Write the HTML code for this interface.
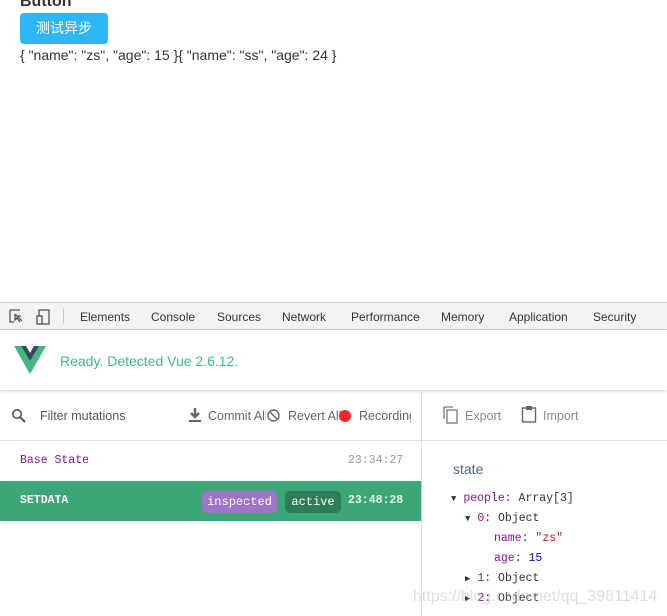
<!DOCTYPE html><html><head><style>
*{margin:0;padding:0;box-sizing:border-box}
body{width:667px;height:616px;position:relative;background:#fff;font-family:"Liberation Sans","Noto Sans CJK SC",sans-serif;overflow:hidden}
.a{position:absolute;white-space:nowrap}
.m{font-family:"Liberation Mono","DejaVu Sans Mono",monospace;font-size:12px}
.t{font-size:12px;color:#333}
.g{font-size:12.5px;color:#666}
</style></head><body>
<div class="a" style="left:20px;top:-7px;font-size:16px;font-weight:bold;color:#333">Button</div>
<div class="a" style="left:20px;top:13px;width:88px;height:31px;background:#2db7f5;border-radius:4px;color:#fff;font-size:14px;text-align:center;line-height:31px">测试异步</div>
<div class="a" style="left:20px;top:47px;font-size:14px;color:#333">{ "name": "zs", "age": 15 }{ "name": "ss", "age": 24 }</div>

<div class="a" style="left:0;top:302px;width:667px;height:28px;background:#f3f3f3;border-top:1px solid #ccc;border-bottom:1px solid #ccc"></div>
<svg class="a" style="left:9px;top:308px" width="44" height="18"><path d="M1 2h10M1 2v12h4M12 8l-3 0M6 6l7 7M6 6v6l2-2 3 4" stroke="#555" fill="none" stroke-width="1.3"/><rect x="30" y="2" width="10" height="14" stroke="#555" fill="none" stroke-width="1.3"/><rect x="28" y="8" width="5" height="8" stroke="#555" fill="#f3f3f3" stroke-width="1.3"/></svg>
<div class="a" style="left:63px;top:308px;width:1px;height:16px;background:#ccc"></div>
<div class="a t" style="left:80px;top:310px">Elements</div>
<div class="a t" style="left:151px;top:310px">Console</div>
<div class="a t" style="left:217px;top:310px">Sources</div>
<div class="a t" style="left:282px;top:310px">Network</div>
<div class="a t" style="left:351px;top:310px">Performance</div>
<div class="a t" style="left:441px;top:310px">Memory</div>
<div class="a t" style="left:509px;top:310px">Application</div>
<div class="a t" style="left:593px;top:310px">Security</div>

<div class="a" style="left:0;top:330px;width:667px;height:60px;background:#fff;box-shadow:0 1px 3px rgba(0,0,0,.2)"></div>
<svg class="a" style="left:14px;top:346px" width="32" height="28"><path d="M0 0h7l9 15 9-15h7L16 28z" fill="#41b883"/><path d="M7 0h5l4 7 4-7h5L16 15z" fill="#35495e"/></svg>
<div class="a" style="left:60px;top:353px;font-size:14px;color:#42b983">Ready. Detected Vue 2.6.12.</div>

<div class="a" style="left:421px;top:391px;width:1px;height:225px;background:#e0e0e0"></div>
<div class="a" style="left:0;top:440px;width:667px;height:1px;background:#e0e0e0"></div>
<svg class="a" style="left:11px;top:408px" width="16" height="16"><circle cx="6" cy="6" r="4.2" stroke="#555" stroke-width="1.6" fill="none"/><path d="M9 9l5 5" stroke="#555" stroke-width="2"/></svg>
<div class="a g" style="left:40px;top:409px;color:#555">Filter mutations</div>
<svg class="a" style="left:187px;top:407px" width="16" height="16"><path d="M8 1v9M4 6l4 4 4-4" stroke="#666" stroke-width="2.5" fill="none"/><path d="M2 14h12" stroke="#666" stroke-width="2"/></svg>
<div class="a g" style="left:208px;top:409px;width:58px;overflow:hidden">Commit All</div>
<svg class="a" style="left:266px;top:408px" width="15" height="15"><circle cx="7.5" cy="7.5" r="5.5" stroke="#666" stroke-width="1.4" fill="none"/><path d="M3.5 3.5l8 8" stroke="#666" stroke-width="1.4"/></svg>
<div class="a g" style="left:288px;top:409px">Revert All</div>
<div class="a" style="left:339px;top:410px;width:12px;height:12px;border-radius:50%;background:#f22"></div>
<div class="a g" style="left:359px;top:409px;width:52px;overflow:hidden">Recording</div>
<svg class="a" style="left:443px;top:406px" width="16" height="18"><path d="M1 1h9M1 1v12" stroke="#777" stroke-width="1.3" fill="none"/><rect x="4" y="4" width="10" height="13" stroke="#777" stroke-width="1.3" fill="none"/></svg>
<div class="a g" style="left:465px;top:409px;color:#888">Export</div>
<svg class="a" style="left:521px;top:405px" width="16" height="18"><rect x="1.5" y="3" width="13" height="14" stroke="#666" stroke-width="1.4" fill="none"/><rect x="5" y="1" width="6" height="4" fill="#666"/></svg>
<div class="a g" style="left:543px;top:409px;color:#888">Import</div>

<div class="a m" style="left:20px;top:454px;color:#881391;font-size:11.5px">Base State</div>
<div class="a m" style="left:348px;top:454px;color:#999;font-size:11.5px">23:34:27</div>
<div class="a" style="left:0;top:481px;width:421px;height:40px;background:#3ba776;box-shadow:0 2px 4px rgba(0,0,0,.1)"></div>
<div class="a m" style="left:20px;top:494px;color:#fff;font-size:11.5px;font-weight:bold">SETDATA</div>
<div class="a m" style="left:202px;top:491px;width:75px;height:22px;border-radius:5px;background:#9e73c9;color:#fff;text-align:center;line-height:22px">inspected</div>
<div class="a m" style="left:285px;top:491px;width:56px;height:22px;border-radius:5px;background:#2c7d58;color:#fff;text-align:center;line-height:22px">active</div>
<div class="a m" style="left:348px;top:494px;color:#e8f5ee;font-size:11.5px;font-weight:bold">23:48:28</div>

<div class="a" style="left:453px;top:461px;font-size:14px;color:#486887">state</div>
<div class="a m" style="left:451px;top:492px;color:#333;font-size:11.5px"><span style="font-size:9px">▼</span> <span style="color:#881391">people</span>: Array[3]</div>
<div class="a m" style="left:465px;top:512px;color:#333;font-size:11.5px"><span style="font-size:9px">▼</span> <span style="color:#881391">0</span>: Object</div>
<div class="a m" style="left:494px;top:532px;color:#333;font-size:11.5px"><span style="color:#881391">name</span>: <span style="color:#c41a16">"zs"</span></div>
<div class="a m" style="left:494px;top:552px;color:#333;font-size:11.5px"><span style="color:#881391">age</span>: <span style="color:#1c00cf">15</span></div>
<div class="a m" style="left:465px;top:572px;color:#333;font-size:11.5px"><span style="font-size:9px">▶</span> <span style="color:#881391">1</span>: Object</div>
<div class="a m" style="left:465px;top:592px;color:#333;font-size:11.5px"><span style="font-size:9px">▶</span> <span style="color:#881391">2</span>: Object</div>
<div class="a" style="left:413px;top:588px;font-size:16px;color:rgba(190,190,190,.5)">https://blog.csdn.net/qq_39811414</div>
</body></html>
